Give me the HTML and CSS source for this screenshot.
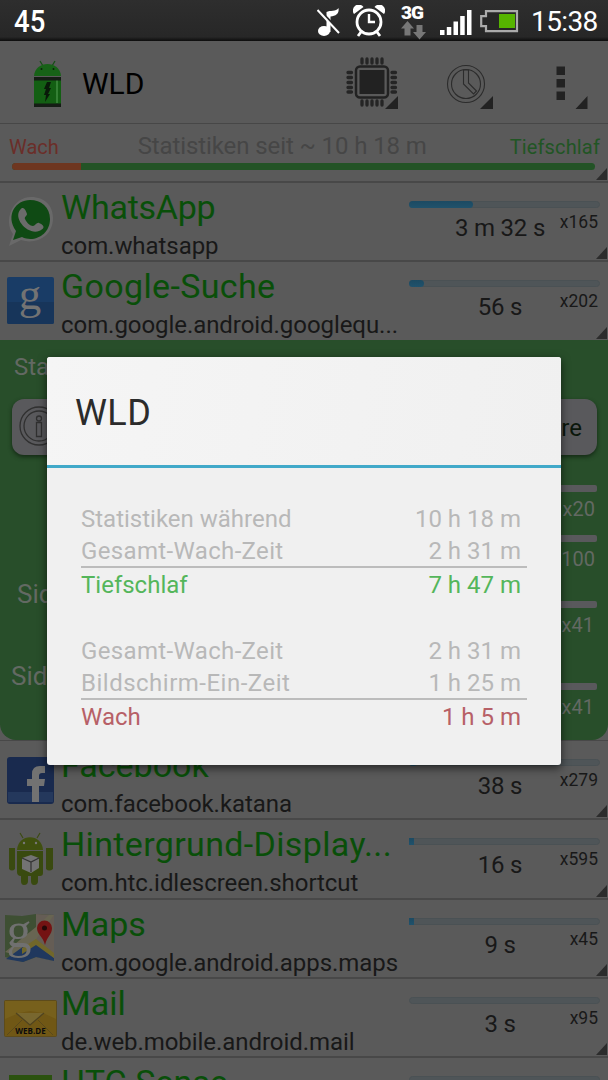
FILE: index.html
```html
<!DOCTYPE html>
<html lang="de">
<head>
<meta charset="UTF-8">
<title>WLD</title>
<link rel="stylesheet" href="styles.css">
</head>
<body>

<div class="status">
  <div class="percent"><span>45</span></div>
  <svg class="st-note" width="24" height="30" viewBox="0 0 24 30">
    <ellipse cx="7" cy="24" rx="6" ry="5" fill="#fff"/>
    <path d="M9.500 25V5C13 3 19 5 21.500 1c1 6-3 8-8 8.500V25z" fill="#fff"/>
    <path d="M2 3L24 26" stroke="#2a2a2a" stroke-width="3"/>
    <path d="M0.500 3L22 26" stroke="#fff" stroke-width="2"/>
  </svg>
  <svg class="st-alarm" width="32" height="32" viewBox="0 0 32 32">
    <g fill="none" stroke="#fff">
      <circle cx="16" cy="17" r="12" stroke-width="2.800"/>
      <path d="M16 9v8h6" stroke-width="2.400"/>
      <path d="M8 27l-3 4M24 27l3 4" stroke-width="2.800"/>
    </g>
    <path d="M1 9a5.500 5.500 0 0 1 9.500-7zM31 9a5.500 5.500 0 0 0-9.500-7z" fill="#fff"/>
  </svg>
  <div class="st-net">
    <b>3G</b>
    <svg width="26" height="19" viewBox="0 0 26 19">
      <path d="M6.500 0l6.500 7.500h-3.500v7h-6v-7H0z" fill="#777"/>
      <path d="M18.500 18.500L25 11h-3.500V4h-6v7H12z" fill="#777"/>
    </svg>
  </div>
  <svg class="st-signal" width="32" height="26" viewBox="0 0 32 26">
    <path d="M0 20h4.500v5H0zM6.800 17h4.500v8H6.800zM13.500 11.500H18V25h-4.500zM20.200 6h4.500v19h-4.500zM27 0h4.500v25H27z" fill="#fff"/>
  </svg>
  <svg class="st-battery" width="39" height="23" viewBox="0 0 39 23">
    <path d="M6 1.200h31v20H6v-5H1.200v-10H6z" fill="#262626" stroke="#ababab" stroke-width="2.200"/>
    <path d="M19 4h16v14H19z" fill="#56b400"/>
  </svg>
  <span class="clock">15:38</span>
</div>

<div class="actionbar">
  <svg class="logo" width="29" height="48" viewBox="0 0 29 48">
    <path d="M7 1l3 5M22 1l-3 5" stroke="#174f17" stroke-width="1.300"/>
    <path d="M1 16c1-16 26-16 27 0z" fill="#176217"/>
    <circle cx="8.500" cy="9" r="1" fill="#0b210b"/><circle cx="20.500" cy="9" r="1" fill="#0b210b"/>
    <path d="M1 17h27v30H1z" fill="#135f13"/>
    <path d="M23 20h2v23h-2z" fill="#348034"/>
    <path d="M1 17h27v3.500H1zM1 43.500h27V47H1z" fill="#151d15"/>
    <path d="M14 22h4l-2 6h2l-3 6h2l-5 8 1-7h-2l2-6h-2z" fill="#091909"/>
  </svg>
  <h1>WLD</h1>
  <svg class="act-cpu" width="53" height="53" viewBox="0 0 53 53">
    <rect x="10" y="9.500" width="32" height="31" rx="4" fill="none" stroke="#222" stroke-width="2.500"/>
    <rect x="13.500" y="13" width="25" height="24" fill="#222"/>
    <path d="M16 2v4M21 2v4M26 2v4M31 2v4M36 2v4M16 44v4M21 44v4M26 44v4M31 44v4M36 44v4M2 15.500h3.500M2 20.500h3.500M2 25.500h3.500M2 30.500h3.500M2 35h3.500M46 15.500h3.500M46 20.500h3.500M46 25.500h3.500M46 30.500h3.500M46 35h3.500" stroke="#252525" stroke-width="3.300" stroke-linecap="round"/>
    <path d="M52 39v13H39z" fill="#222"/>
  </svg>
  <svg class="act-time" width="48" height="46" viewBox="0 0 48 46">
    <g fill="none" stroke="#2c2c2c" stroke-width="1.100">
      <circle cx="20" cy="20" r="18.500"/>
      <circle cx="20" cy="20" r="14.500"/>
      <path d="M17.500 6v14l10 10 3-3-8-8V6z"/>
    </g>
    <path d="M47 32v13H34z" fill="#222"/>
  </svg>
  <svg class="act-more" width="33" height="44" viewBox="0 0 33 44">
    <path d="M0.500 0.500H9v8.500H0.500zM0.500 13H9v8.500H0.500zM0.500 25.500H9V34H0.500zM31.500 30v13h-12z" fill="#222"/>
  </svg>
</div>

<div class="summary">
  <div class="labels">
    <span class="awake">Wach</span>
    <span class="since">Statistiken seit ~ 10 h 18 m</span>
    <span class="deep">Tiefschlaf</span>
  </div>
  <div class="ratio"><i></i></div>
</div>

<div class="app">
  <svg class="icon" width="56" height="70" viewBox="0 0 56 70">
    <path d="M9 63l4-12C3 37 13 14 31 14c14 0 22 9 22 21 0 19-18 27-32 22z" fill="#696969"/>
    <path d="M13 57l3-9C5 32 16 17 30 17c11 0 20 7 20 19 0 16-16 24-28 18z" fill="#0f4a14"/>
    <path d="M20 27c3-5 6 0 7 4 0 2-3 3-2 5 2 4 5 7 8 7 2 0 4-4 6-3 7 3 5 6 0 8-11 4-26-12-19-21z" fill="#6b6b6b"/>
  </svg>
  <div class="names"><div class="name tight">WhatsApp</div><div class="pkg">com.whatsapp</div></div>
  <div class="usage"><div class="bar"><i style="width:64px"></i></div><div class="nums"><span>3 m 32 s</span><em>x165</em></div></div>
</div>

<div class="app last">
  <svg class="icon" width="56" height="70" viewBox="0 0 56 70">
    <rect x="7" y="15" width="47" height="47" rx="2" fill="#193c66"/>
    <path d="M7 40h47v20q0 2-2 2H9q-2 0-2-2z" fill="#17355a"/>
    <text x="30" y="47" class="g-letter">g</text>
  </svg>
  <div class="names"><div class="name wide">Google-Suche</div><div class="pkg">com.google.android.googlequ...</div></div>
  <div class="usage"><div class="bar"><i style="width:15px"></i></div><div class="nums"><span>56 s</span><em>x202</em></div></div>
</div>

<div class="details">
  <p class="d-title">Sta</p>
  <div class="button">
    <svg width="42" height="42" viewBox="0 0 42 42">
      <g fill="none" stroke="#303030" stroke-width="1.300">
        <circle cx="21" cy="21" r="19"/>
        <circle cx="21" cy="21" r="15"/>
        <circle cx="21" cy="13.500" r="2.500"/>
        <path d="M18.500 17.500h5v14h-5z"/>
      </g>
    </svg>
    <span>re</span>
  </div>
  <div class="wakelock w1"><span></span><div><i></i><em>x20</em></div></div>
  <div class="wakelock w2"><span></span><div><i></i><em>x100</em></div></div>
  <div class="wakelock w3"><span>Sid</span><div><i></i><em>x41</em></div></div>
  <div class="wakelock w4"><span>Sid</span><div><i></i><em>x41</em></div></div>
</div>

<div class="app">
  <svg class="icon" width="56" height="70" viewBox="0 0 56 70">
    <rect x="7" y="16" width="47" height="47" rx="3" fill="#192a4e"/>
    <path d="M8 51h45v10H8z" fill="#24385c"/>
    <path d="M32 61V45h-5v-7h5v-5q0-8 8-8h5v7h-3q-3 0-3 3v3h6l-1 7h-5v16z" fill="#727272"/>
  </svg>
  <div class="names"><div class="name">Facebook</div><div class="pkg">com.facebook.katana</div></div>
  <div class="usage"><div class="bar"><i style="width:8px"></i></div><div class="nums"><span>38 s</span><em>x279</em></div></div>
</div>

<div class="app">
  <svg class="icon" width="56" height="70" viewBox="0 0 56 70">
    <path d="M20 13l3 5M40 13l-3 5" stroke="#3d4b13" stroke-width="1.200"/>
    <path d="M17 30c1-17 25-17 26 0z" fill="#40500f"/>
    <path d="M17 31h26v22q0 3-3 3h-2v5q0 4-4 4-3 0-3-4v-5h-3v5q0 4-4 4-3 0-3-4v-5q-4 0-4-4z" fill="#394a0f"/>
    <path d="M9 28h6v21q-3 3-6 0zM46 28h7v21q-4 3-7 0z" fill="#3a4a10"/>
    <circle cx="24" cy="23" r="1.200" fill="#777"/><circle cx="36" cy="23" r="1.200" fill="#777"/>
    <path d="M22 38l9-3 8 3v10l-8 5-9-4z" fill="#737373"/>
    <path d="M22 38l9 4 8-4M31 42v10" fill="none" stroke="#333" stroke-width="1.200"/>
  </svg>
  <div class="names"><div class="name wide">Hintergrund-Display...</div><div class="pkg">com.htc.idlescreen.shortcut</div></div>
  <div class="usage"><div class="bar"><i class="sq" style="width:5px"></i></div><div class="nums"><span>16 s</span><em>x595</em></div></div>
</div>

<div class="app">
  <svg class="icon" width="56" height="70" viewBox="0 0 56 70">
    <path d="M5 15l17 1 14-2 18 1v46l-18-4-13 5-18-5z" fill="#3e4f33"/>
    <path d="M36 14l18 1v46l-18-4z" fill="#655d55"/>
    <path d="M5 52l31-25 13-12h5L23 57z" fill="#686552"/>
    <path d="M6 59l18-13 12-2 18 14v3l-18-4-13 5z" fill="#20385e"/>
    <path d="M22 48l14-9 18 14v5L36 45l-14 9z" fill="#71672a"/>
    <text x="19" y="47" class="maps-g">g</text>
    <path d="M45 45c-2-9-8-10-8-17a7.500 7.500 0 0 1 15 0c0 7-5 8-7 17z" fill="#741313"/>
    <circle cx="44.500" cy="28" r="2.500" fill="#260808"/>
  </svg>
  <div class="names"><div class="name">Maps</div><div class="pkg">com.google.android.apps.maps</div></div>
  <div class="usage"><div class="bar"><i class="sq" style="width:5px"></i></div><div class="nums"><span>9 s</span><em>x45</em></div></div>
</div>

<div class="app">
  <svg class="icon" width="57" height="70" viewBox="0 0 57 70">
    <rect x="4.500" y="21.500" width="52" height="36" rx="1" fill="#705715" stroke="#5d4b1b"/>
    <path d="M5 40l14-6 11-2 13 2 13 6v-18H5z" fill="#77601c"/>
    <path d="M16 34l14 12 14-12" fill="#78672f" stroke="#4f4320" stroke-width="1.200"/>
    <path d="M7 56l15-15M53 56L38 41" stroke="#5a491b"/>
    <text x="30.500" y="55" class="webde">WEB.DE</text>
  </svg>
  <div class="names mail"><div class="name">Mail</div><div class="pkg">de.web.mobile.android.mail</div></div>
  <div class="usage"><div class="bar"></div><div class="nums"><span>3 s</span><em>x95</em></div></div>
</div>

<div class="app cut">
  <svg class="icon" width="56" height="22" viewBox="0 0 56 22">
    <path d="M9 17h43v5H9z" fill="#2b520f"/>
  </svg>
  <div class="names"><div class="name">HTC Sense</div></div>
  <div class="usage"><div class="bar"></div></div>
</div>

<div class="dialog">
  <h2>WLD</h2>
  <div class="content">
    <dl>
      <div><dt>Statistiken während</dt><dd>10 h 18 m</dd></div>
      <div><dt class="wide">Gesamt-Wach-Zeit</dt><dd>2 h 31 m</dd></div>
      <div class="total green"><dt>Tiefschlaf</dt><dd>7 h 47 m</dd></div>
    </dl>
    <dl>
      <div><dt class="wide">Gesamt-Wach-Zeit</dt><dd>2 h 31 m</dd></div>
      <div><dt class="wider">Bildschirm-Ein-Zeit</dt><dd>1 h 25 m</dd></div>
      <div class="total red"><dt>Wach</dt><dd>1 h 5 m</dd></div>
    </dl>
  </div>
</div>

</body>
</html>
```

FILE: styles.css
```css
* {box-sizing: border-box;}
html, body {margin: 0; height: 1080px; overflow: hidden;}
body {
  position: relative;
  width: 608px;
  background: #5a5a5a;
  color: #181818;
  font-family: Roboto, "Liberation Sans", sans-serif;
  white-space: nowrap;
}
h1, h2, p, dl, dt, dd {margin: 0; font-weight: 400;}
em, i {font-style: normal;}
svg {display: block; flex: none;}

/* status bar */
.status {
  display: flex;
  height: 41px;
  background: linear-gradient(#2e2e2e, #272727 90%, #0c0c0c);
  color: #fff;
}
.percent {width: 317px; padding-left: 14px; font-size: 32px; font-weight: 500; line-height: 43px;}
.percent span {display: inline-block; transform: scaleX(.86); transform-origin: left;}
.st-note {margin-top: 7px;}
.st-alarm {margin: 5px 0 0 12px;}
.st-net {width: 26px; margin: 4px 0 0 16px;}
.st-net b {display: block; height: 17px; font-size: 19px; line-height: 17px; font-weight: 900; letter-spacing: -1px;}
.st-signal {margin: 10px 0 0 13px;}
.st-battery {margin: 10px 0 0 8px;}
.clock {margin-left: 12px; font-size: 28px; line-height: 44px; letter-spacing: -.600px;}

/* action bar */
.actionbar {display: flex; height: 83px; border-bottom: 1px solid #474747;}
.logo {margin: 19px 0 0 33px;}
.actionbar h1 {width: 284px; padding-left: 20px; color: #000; font-size: 30px; line-height: 85px;}
.act-cpu {margin-top: 16px;}
.act-time {margin: 23px 0 0 47px;}
.act-more {margin: 25px 0 0 62px;}

/* summary */
.summary {position: relative; height: 59px; border-bottom: 2px solid #484848;}
.labels {display: flex; justify-content: space-between; height: 39px; padding: 0 8px 0 9px;}
.awake, .deep {font-size: 20px; line-height: 47px;}
.awake {color: #6b2e29;}
.deep {color: #215524; letter-spacing: .150px;}
.since {color: #464646; font-size: 24px; line-height: 44px; letter-spacing: -.100px; padding-right: 4px;}
.ratio {width: 583px; height: 7px; margin-left: 12px; border-radius: 4px; background: #235326; overflow: hidden;}
.ratio i {display: block; width: 69px; height: 7px; background: #6e3620;}

/* app rows */
.app {position: relative; display: flex; height: 79.300px; border-bottom: 2px solid #484848;}
.app.last {height: 77.700px; border: 0;}
.app.cut {height: 22px; border: 0; overflow: hidden;}
.app.cut::after {display: none;}
.details + .app {height: 80.300px; border-top: 1px solid #484848;}
.app::after, .summary::after {
  content: "";
  position: absolute;
  right: 1px;
  bottom: 1px;
  border-left: 11px solid transparent;
  border-bottom: 12px solid #2c2c2c;
}
.names {width: 346px; margin-left: 5px; padding-top: 4px;}
.names.mail {width: 345px; margin-left: 4px;}
.name {color: #094f09; font-size: 34px; line-height: 41px;}
.name.tight {letter-spacing: -.250px;}
.name.wide {letter-spacing: .350px;}
.pkg {font-size: 24px; line-height: 36px; letter-spacing: -.060px;}
.usage {width: 193px; margin-left: 1px; padding-top: 18px;}
.names.mail + .usage {margin-left: 2px;}
.bar {width: 191px; height: 7px; margin-left: 1px; border-radius: 4px; background: #4f5558; border: 1px solid #4a5154;}
.bar i {display: block; height: 7px; margin: -1px; border-radius: 4px; background: linear-gradient(#1c4a62, #20526c);}
.bar i.sq {border-radius: 0;}
.nums {display: flex; justify-content: space-between; padding: 2px 3px 0 46px;}
.nums span {width: 92px; text-align: center; font-size: 24px; line-height: 36px; letter-spacing: -.200px;}
.nums em {font-size: 17.500px; line-height: 25px;}

/* app icon letters */
.g-letter {fill: #737373; font: 45px "Liberation Serif", serif; text-anchor: middle;}
.maps-g {fill: #707070; font: 50px "Liberation Serif", serif; text-anchor: middle;}
.webde {fill: #0c0c0c; font: bold 8px "Open Sans", sans-serif; text-anchor: middle;}

/* expanded row */
.details {height: 400px; background: #284e2a; border-radius: 0 0 16px 16px; color: #636963;}
.d-title {padding: 10px 0 0 14px; height: 59px; font-size: 24px; line-height: 35px;}
.button {
  display: flex;
  align-items: center;
  justify-content: space-between;
  width: 585px;
  height: 56px;
  margin-left: 12px;
  padding: 0 15px 1px 6px;
  border-radius: 12px;
  background: #59595c;
  box-shadow: 0 2px 4px #142a15;
  color: #0b170b;
  font-size: 24px;
}
.button span {padding-top: 3px;}
.wakelock {display: flex; justify-content: space-between; padding: 0 11px 0 17px;}
.wakelock span {font-size: 26px; line-height: 30px; margin-top: -22px;}
.wakelock > div {width: 187px; text-align: right;}
.wakelock i {display: block; height: 7px; background: #59595c; border-radius: 2px;}
.wakelock em {display: block; padding-right: 2px; font-size: 20px; line-height: 34px;}
.w1 {height: 50.500px; margin-top: 30px;}
.w2 {height: 65.500px;}
.w3 {height: 82px;}
.w3 em, .w4 em {padding-right: 3px;}
.w4 {padding-left: 11px;}

/* dialog */
.dialog {
  position: absolute;
  left: 47px;
  top: 357px;
  width: 514px;
  height: 408px;
  border-radius: 3px;
  background: #f0f0f0;
  box-shadow: 0 3px 10px rgba(0, 0, 0, .6);
}
.dialog h2 {
  height: 111px;
  padding-left: 28px;
  border-bottom: 3px solid #41a9c9;
  border-radius: 3px 3px 0 0;
  background: linear-gradient(100deg, #f5f5f5, #f0f0f0);
  color: #2b2b2b;
  font-size: 36px;
  line-height: 113px;
  letter-spacing: .400px;
}
.content {padding: 34px 34px 0;}
dl {height: 132px; font-size: 24px; line-height: 35px; color: #b8b8b8;}
dl div {display: flex; justify-content: space-between; height: 32px; padding-right: 6px;}
dl dt.wide {letter-spacing: .350px;}
dl dt.wider {letter-spacing: .500px;}
dl .total {height: 35px; border-top: 2px solid #bcbcbc; line-height: 34px;}
.green {color: #54b65b;}
.red {color: #b76067;}
```
